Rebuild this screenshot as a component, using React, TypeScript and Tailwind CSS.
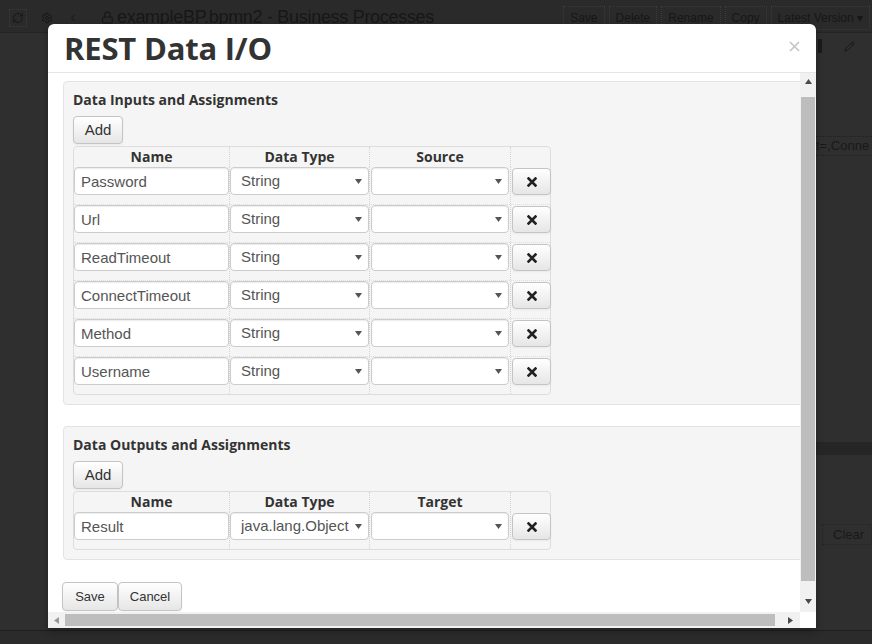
import React from 'react';
import { RefreshCw, Settings, ChevronLeft, Lock, Pencil } from 'lucide-react';

const inputRows = [
  { name: 'Password', type: 'String' },
  { name: 'Url', type: 'String' },
  { name: 'ReadTimeout', type: 'String' },
  { name: 'ConnectTimeout', type: 'String' },
  { name: 'Method', type: 'String' },
  { name: 'Username', type: 'String' },
];

const outputRows = [{ name: 'Result', type: 'java.lang.Object' }];

const head = "font-['Open_Sans',sans-serif] font-bold text-[#333]";
const colLine = 'border-l border-dotted border-[#d4d4d4]';

function Caret() {
  return (
    <svg width="7" height="5" viewBox="0 0 7 5">
      <path d="M0 0h7L3.5 5z" fill="#555" />
    </svg>
  );
}

function RemoveIcon() {
  return (
    <svg width="10" height="10" viewBox="0 0 10 10">
      <path d="M1.5 1.5l7 7M8.5 1.5l-7 7" stroke="#222" strokeWidth="2.6" strokeLinecap="square" />
    </svg>
  );
}

function Select({ value }: { value: string }) {
  return (
    <div className="flex h-[28px] items-center rounded-[4px] border border-[#cccccc] bg-white pl-[10px] text-[15px] text-[#555] shadow-[inset_0_1px_1px_rgba(0,0,0,0.075)]">
      <span className="truncate">{value}</span>
      <span className="ml-auto mr-[6px] flex shrink-0">
        <Caret />
      </span>
    </div>
  );
}

function GrayButton({ children, className = '' }: { children: React.ReactNode; className?: string }) {
  return (
    <button className={`flex items-center justify-center rounded-[4px] border border-[#c4c4c4] bg-gradient-to-b from-white to-[#e6e6e6] text-[#333] shadow-[0_1px_2px_rgba(0,0,0,0.05)] ${className}`}>
      {children}
    </button>
  );
}

function IoTable({ third, rows }: { third: string; rows: { name: string; type: string }[] }) {
  return (
    <div className="mt-[2px] w-[478px] rounded-[4px] border border-[#dddddd]">
      <div className={`grid h-[20px] grid-cols-[155px_140px_141px_40px] text-[14px] leading-[20px] ${head}`}>
        <div className="text-center">Name</div>
        <div className={`${colLine} text-center`}>Data Type</div>
        <div className={`${colLine} text-center`}>{third}</div>
        <div className={colLine} />
      </div>
      {rows.map((r) => (
        <div key={r.name} className="grid grid-cols-[155px_140px_141px_40px] border-b border-dotted border-[#dedede] last:border-b-0">
          <div className="pb-[9px]">
            <input
              readOnly
              value={r.name}
              className="h-[28px] w-full rounded-[4px] border border-[#cccccc] bg-white px-[6px] text-[15px] text-[#555] shadow-[inset_0_1px_1px_rgba(0,0,0,0.075)] outline-none"
            />
          </div>
          <div className={`${colLine} pb-[9px]`}>
            <Select value={r.type} />
          </div>
          <div className={`${colLine} px-[1px] pb-[9px]`}>
            <Select value="" />
          </div>
          <div className={`${colLine} pl-[1px] pb-[9px]`}>
            <GrayButton className="mt-px h-[27px] w-[39px]">
              <RemoveIcon />
            </GrayButton>
          </div>
        </div>
      ))}
    </div>
  );
}

function Well({ title, third, rows, className = '' }: { title: string; third: string; rows: { name: string; type: string }[]; className?: string }) {
  return (
    <div className={`w-[770px] shrink-0 rounded-[4px] border border-[#e3e3e3] bg-[#f5f5f5] px-[9px] pb-[9px] pt-[8px] ${className}`}>
      <h3 className={`h-[20px] text-[14px] leading-[20px] ${head}`}>{title}</h3>
      <GrayButton className="mt-[6px] h-[28px] w-[50px] text-[15px]">Add</GrayButton>
      <IoTable third={third} rows={rows} />
    </div>
  );
}

function Tri({ dir }: { dir: 'up' | 'down' | 'left' | 'right' }) {
  const d = {
    up: 'M0 5h7L3.5 0z',
    down: 'M0 0h7L3.5 5z',
    left: 'M5 0v7L0 3.5z',
    right: 'M0 0v7L5 3.5z',
  }[dir];
  const horiz = dir === 'left' || dir === 'right';
  return (
    <svg width={horiz ? 5 : 7} height={horiz ? 7 : 5} viewBox={horiz ? '0 0 5 7' : '0 0 7 5'}>
      <path d={d} fill={dir === 'left' ? '#9a9a9a' : '#4a4a4a'} />
    </svg>
  );
}

function Modal() {
  return (
    <div className="absolute left-[48px] top-[24px] flex h-[604px] w-[768px] flex-col overflow-hidden rounded-t-[6px] bg-white shadow-[0_3px_7px_rgba(0,0,0,0.3)]">
      <div className="flex h-[49px] shrink-0 items-center border-b border-[#e5e5e5] pl-[16px] pr-[16px]">
        <h2 className={`text-[31px] leading-[48px] tracking-[-0.2px] ${head}`}>REST Data I/O</h2>
        <svg className="ml-auto mt-[-4px]" width="11" height="11" viewBox="0 0 11 11">
          <path d="M1 1l9 9M10 1l-9 9" stroke="#c4c4c4" strokeWidth="1.6" />
        </svg>
      </div>

      <div className="flex h-[539px] shrink-0">
        <div className="flex w-[752px] flex-col overflow-hidden pl-[15px] pt-[8px]">
          <Well title="Data Inputs and Assignments" third="Source" rows={inputRows} />
          <Well title="Data Outputs and Assignments" third="Target" rows={outputRows} className="mt-[21px]" />
          <div className="ml-[-1px] mt-[22px] flex text-[13px]">
            <GrayButton className="h-[29px] w-[56px] border-[#9e9e9e]">Save</GrayButton>
            <GrayButton className="h-[29px] w-[64px]">Cancel</GrayButton>
          </div>
        </div>
        <div className="flex w-[16px] flex-col bg-[#f1f1f1]">
          <div className="flex h-[24px] justify-center pt-[6px]">
            <Tri dir="up" />
          </div>
          <div className="mx-[1px] h-[484px] bg-[#bdbdbd]" />
          <div className="flex flex-1 items-end justify-center pb-[8px]">
            <Tri dir="down" />
          </div>
        </div>
      </div>

      <div className="flex h-[16px] shrink-0">
        <div className="flex w-[752px] bg-[#f1f1f1]">
          <div className="flex w-[17px] items-center justify-center">
            <Tri dir="left" />
          </div>
          <div className="my-[2px] w-[710px] bg-[#bdbdbd]" />
          <div className="flex flex-1 items-center justify-center pl-[6px]">
            <Tri dir="right" />
          </div>
        </div>
        <div className="w-[16px] bg-white" />
      </div>
    </div>
  );
}

function TopButton({ children }: { children: React.ReactNode }) {
  return <span className="border border-dotted border-[#3a3a3a] px-[6px] py-[2px]">{children}</span>;
}

export default function App() {
  return (
    <div className="relative flex h-[644px] w-[872px] flex-col overflow-hidden bg-[#2f2f2f] font-['Liberation_Sans',Arial,sans-serif]">
      <div className="flex h-[33px] shrink-0 items-center gap-[14px] border-b border-[#242424] bg-[#2a2a2a] pl-[9px] pt-[3px] text-[#171717]">
        <span className="border border-dotted border-[#3a3a3a] p-[2px]">
          <RefreshCw size={12} />
        </span>
        <Settings size={12} />
        <ChevronLeft size={12} />
        <span className="ml-[8px] flex items-center gap-[3px] text-[18px] tracking-[-0.3px]">
          <Lock size={13} />
          exampleBP.bpmn2 - Business Processes
        </span>
        <div className="ml-auto flex gap-[4px] pr-[2px] text-[12px]">
          <TopButton>Save</TopButton>
          <TopButton>Delete</TopButton>
          <TopButton>Rename</TopButton>
          <TopButton>Copy</TopButton>
          <TopButton>Latest Version ▾</TopButton>
        </div>
      </div>

      <div className="flex flex-1">
        <div className="flex-1" />
        <div className="flex w-[56px] flex-col text-[#191919]">
          <div className="mt-[6px] flex items-center gap-[22px] pl-[2px]">
            <span className="h-[14px] w-[4px] bg-[#1a1a1a]" />
            <Pencil size={11} />
          </div>
          <div className="mt-[83px] h-[20px] border-y border-dotted border-[#1f1f1f] text-[13px] leading-[18px]">t=,Conne</div>
          <div className="mt-[286px] h-[13px] bg-[#262626]" />
          <div className="ml-[6px] mt-[69px] flex h-[21px] items-center border border-dotted border-[#242424] pl-[10px] text-[13px]">Clear</div>
        </div>
      </div>
      <div className="h-[14px] shrink-0 border-t border-[#1f1f1f] bg-[#2b2b2b]" />

      <Modal />
    </div>
  );
}
